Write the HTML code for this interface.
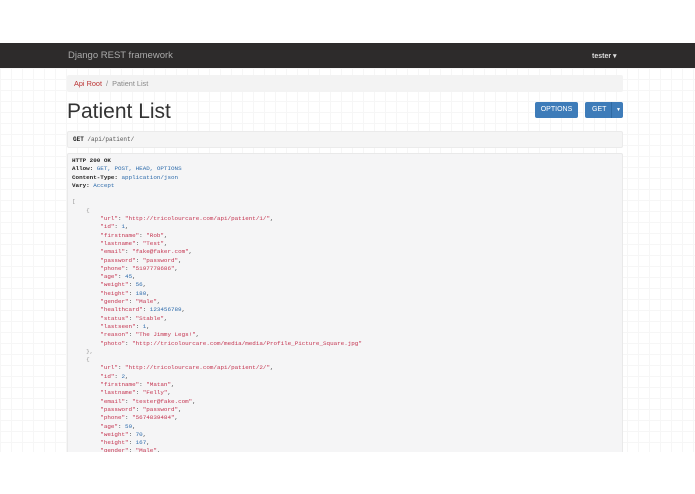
<!DOCTYPE html>
<html><head><meta charset="utf-8"><style>
*{margin:0;padding:0;box-sizing:border-box}
body{width:695px;height:494px;background:#fff;position:relative;overflow:hidden;font-family:"Liberation Sans",sans-serif}
.bg{position:absolute;left:0;top:68px;width:695px;height:384px;background-color:#fff;background-image:linear-gradient(#f6f6f6 1px,transparent 1px),linear-gradient(90deg,#f6f6f6 1px,transparent 1px);background-size:11px 11px}
.nav{position:absolute;left:0;top:43px;width:695px;height:25px;background:#2d2b2b}
.brand{position:absolute;left:68px;top:50px;color:#aaa;font-size:9.5px}
.user{position:absolute;left:592px;top:52px;color:#ddd;font-size:7px;font-weight:bold}
.bc{position:absolute;left:67px;top:75px;width:556px;height:17px;background:#f3f3f3;border-radius:2px;font-size:7.3px;line-height:17px;padding-left:7px;color:#888}
.bc a{color:#b33}
h1{position:absolute;left:67px;top:100px;font-weight:normal;font-size:21px;color:#333}
.btn{position:absolute;top:102px;height:16px;background:#3e7cb9;border-radius:2px;color:#fff;font-size:7px;line-height:16px;text-align:center}
.req{position:absolute;left:67px;top:131px;width:556px;height:17px;background:#f5f5f5;border:1px solid #ebebeb;border-radius:2px;font-family:"Liberation Mono",monospace;font-size:6px;line-height:15px;padding-left:5px;color:#555}
.resp{position:absolute;left:67px;top:153px;width:556px;height:299px;background:#f5f5f6;border:1px solid #e9e9e9;border-bottom:none;border-radius:2px 2px 0 0;overflow:hidden}
pre{position:absolute;left:4px;top:3px;font-family:"Liberation Mono",monospace;font-size:5.9px;line-height:8.3px;color:#333}
.k{color:#c4334f}.n{color:#2d6bab}.p{color:#999}b{color:#222}.v{color:#2d6bab}
</style></head><body>
<div class="bg"></div>
<div class="nav"></div>
<div class="brand">Django REST framework</div>
<div class="user">tester ▾</div>
<div class="bc"><a>Api Root</a> &nbsp;/&nbsp; Patient List</div>
<h1>Patient List</h1>
<div class="btn" style="left:535px;width:43px">OPTIONS</div>
<div class="btn" style="left:585px;width:38px;text-align:left;padding-left:7px">GET <span style="position:absolute;left:26px;top:0;border-left:1px solid #2f6aa3;padding-left:4px;font-size:5px">▼</span></div>
<div class="req"><b>GET</b> /api/patient/</div>
<div class="resp"><pre><b>HTTP 200 OK</b>
<b>Allow:</b> <span class="v">GET, POST, HEAD, OPTIONS</span>
<b>Content-Type:</b> <span class="v">application/json</span>
<b>Vary:</b> <span class="v">Accept</span>

<span class="p">[</span>
    <span class="p">{</span>
        <span class="k">"url"</span>: <span class="k">"http://tricolourcare.com/api/patient/1/"</span>,
        <span class="k">"id"</span>: <span class="n">1</span>,
        <span class="k">"firstname"</span>: <span class="k">"Rob"</span>,
        <span class="k">"lastname"</span>: <span class="k">"Test"</span>,
        <span class="k">"email"</span>: <span class="k">"fake@faker.com"</span>,
        <span class="k">"password"</span>: <span class="k">"password"</span>,
        <span class="k">"phone"</span>: <span class="k">"5197778686"</span>,
        <span class="k">"age"</span>: <span class="n">45</span>,
        <span class="k">"weight"</span>: <span class="n">56</span>,
        <span class="k">"height"</span>: <span class="n">180</span>,
        <span class="k">"gender"</span>: <span class="k">"Male"</span>,
        <span class="k">"healthcard"</span>: <span class="n">123456789</span>,
        <span class="k">"status"</span>: <span class="k">"Stable"</span>,
        <span class="k">"lastseen"</span>: <span class="n">1</span>,
        <span class="k">"reason"</span>: <span class="k">"The Jimmy Legs!"</span>,
        <span class="k">"photo"</span>: <span class="k">"http://tricolourcare.com/media/media/Profile_Picture_Square.jpg"</span>
    <span class="p">},</span>
    <span class="p">{</span>
        <span class="k">"url"</span>: <span class="k">"http://tricolourcare.com/api/patient/2/"</span>,
        <span class="k">"id"</span>: <span class="n">2</span>,
        <span class="k">"firstname"</span>: <span class="k">"Matan"</span>,
        <span class="k">"lastname"</span>: <span class="k">"Felly"</span>,
        <span class="k">"email"</span>: <span class="k">"tester@fake.com"</span>,
        <span class="k">"password"</span>: <span class="k">"password"</span>,
        <span class="k">"phone"</span>: <span class="k">"5674839484"</span>,
        <span class="k">"age"</span>: <span class="n">59</span>,
        <span class="k">"weight"</span>: <span class="n">70</span>,
        <span class="k">"height"</span>: <span class="n">167</span>,
        <span class="k">"gender"</span>: <span class="k">"Male"</span>,
</pre></div>
</body></html>
